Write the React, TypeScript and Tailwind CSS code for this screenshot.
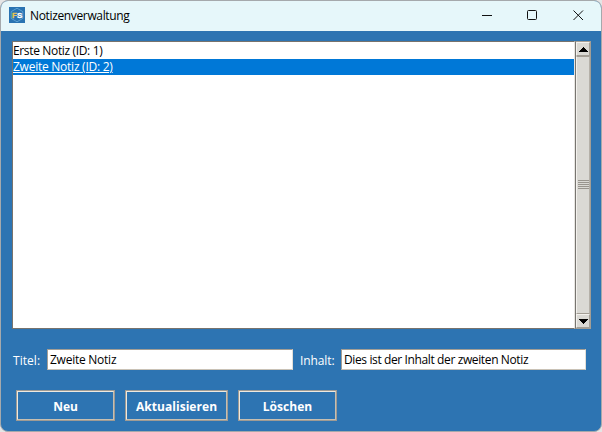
import React from "react";

function AppIcon() {
  return (
    <svg width="16" height="16" viewBox="0 0 16 16" className="relative -top-px shrink-0">
      <rect width="16" height="16" fill="#2973b2" />
      <path d="M8 1.2 13.8 4.6v6.8L8 14.8 2.2 11.4V4.6Z" fill="none" stroke="#72b5df" strokeWidth="0.7" />
      <text x="3" y="10.9" fontSize="8" fontWeight="700" fontFamily="Liberation Sans, sans-serif" fill="#e8c552" stroke="#e8c552" strokeWidth="0.3">F</text>
      <text x="8" y="10.9" fontSize="8" fontWeight="700" fontFamily="Liberation Sans, sans-serif" fill="#ffffff" stroke="#ffffff" strokeWidth="0.3">S</text>
    </svg>
  );
}

function TitleBar() {
  return (
    <header className="flex h-[30px] shrink-0 items-center bg-[#e6f7fa] pl-2">
      <AppIcon />
      <span className="ml-[5px] w-[110px] whitespace-nowrap tracking-[-0.35px] text-black">Notizenverwaltung</span>
      <svg width="102" height="12" viewBox="0 0 102 12" className="relative -top-px mr-[17px] ml-auto" fill="none" stroke="#111">
        <path d="M0 6.5h10" />
        <rect x="45.5" y="1.5" width="9" height="9" rx="1" />
        <path d="M91.5 1.5l9.5 9.5M101 1.5l-9.5 9.5" />
      </svg>
    </header>
  );
}

function ArrowButton({ down = false }: { down?: boolean }) {
  return (
    <div className="flex h-[14px] items-center justify-center border border-t-[#f3f1ed] border-r-[#a39e95] border-b-[#a39e95] border-l-[#f3f1ed] bg-[#dad9d4]">
      <svg width="9" height="5" viewBox="0 0 9 5" shapeRendering="crispEdges">
        <path d={down ? "M0 0h9v1H8v1H7v1H6v1H5v1H4V4H3V3H2V2H1V1H0Z" : "M0 5h9V4H8V3H7V2H6V1H5V0H4v1H3v1H2v1H1v1H0Z"} fill="#000" />
      </svg>
    </div>
  );
}

function Scrollbar() {
  return (
    <div className="flex w-4 flex-col border border-t-[#a39e95] border-r-[#a39e95] border-b-[#a39e95] border-l-[#777570] bg-[#dad9d4]">
      <ArrowButton />
      <div className="flex flex-1 flex-col items-center justify-center gap-px border border-t-[#a39e95] border-r-[#b4b0a8] border-b-[#a39e95] border-l-[#f3f1ed] pb-[2px]">
        {[0, 1, 2, 3, 4].map((line) => (
          <span key={line} className="h-px w-[11px] bg-[#99958e]" />
        ))}
      </div>
      <ArrowButton down />
    </div>
  );
}

function Field({ value, className }: { value: string; className: string }) {
  return (
    <div className={`flex h-[21px] items-center border border-t-[#a39e95] border-r-[#e3dfd8] border-b-[#c9c2b6] border-l-[#a39e95] bg-white pl-[2px] whitespace-nowrap text-black ${className}`}>
      {value}
    </div>
  );
}

function Button({ label, className }: { label: string; className: string }) {
  return (
    <button className={`h-[31px] border border-[#9f9b94] font-bold ${className}`}>
      <span className="flex h-full items-center justify-center border border-t-[#eee9df] border-r-[#c7bfb1] border-b-[#c7bfb1] border-l-[#eee9df] pt-[3px] whitespace-nowrap text-white">{label}</span>
    </button>
  );
}

export default function App() {
  return (
    <div className="h-[432px] w-[602px] bg-[#e5e5e5] font-['Open_Sans','Noto_Sans',sans-serif] text-[12px] leading-[16px]">
      <div className="flex h-full flex-col overflow-hidden rounded-[8px] border border-[#a5a9ac] bg-[#2d74b2]">
        <TitleBar />
        <main className="flex flex-col pt-[10px] pl-[11px]">
          <section className="flex h-[288px] w-[579px]">
            <div className="flex-1 border border-t-[#77736d] border-r-[#e8e6e2] border-b-[#77736d] border-l-[#77736d] bg-white pt-px">
              <div className="h-4 tracking-[-0.35px] text-black">Erste Notiz (ID: 1)</div>
              <div className="h-4 bg-[#0078d7] tracking-[-0.25px] text-white underline underline-offset-1">Zweite Notiz (ID: 2)</div>
            </div>
            <Scrollbar />
          </section>
          <section className="mt-5 flex h-[21px] items-center text-white">
            <span className="w-[35px] pt-[3px] pl-px tracking-[0.05px]">Titel:</span>
            <Field value="Zweite Notiz" className="w-[246px] tracking-[-0.25px]" />
            <span className="ml-[7px] w-[41px] pt-[3px] tracking-[-0.1px]">Inhalt:</span>
            <Field value="Dies ist der Inhalt der zweiten Notiz" className="w-[245px] tracking-[-0.38px]" />
          </section>
          <section className="mt-5 ml-1 flex gap-[10px]">
            <Button label="Neu" className="w-[99px]" />
            <Button label="Aktualisieren" className="w-[103px] tracking-[0.05px]" />
            <Button label="Löschen" className="w-[99px] tracking-[0.05px]" />
          </section>
        </main>
      </div>
    </div>
  );
}
